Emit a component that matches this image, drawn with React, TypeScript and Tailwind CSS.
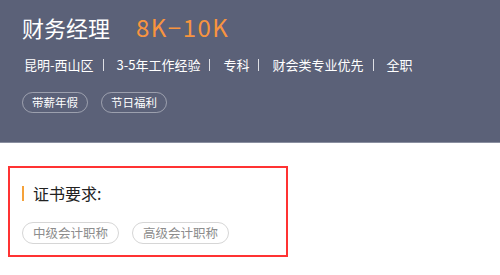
export default function App() {
  const meta = ["昆明-西山区", "3-5年工作经验", "专科", "财会类专业优先", "全职"];
  const perks = ["带薪年假", "节日福利"];
  const certs = ["中级会计职称", "高级会计职称"];

  return (
    <div
      className="w-[500px] h-[275px] bg-white"
      style={{ fontFamily: '"Noto Sans CJK SC", "Noto Sans", sans-serif' }}
    >
      <div className="h-[143px] bg-[#5b6178] px-[22px] pt-[10px] border-b border-[#8a8fa0]">
        <div className="flex items-center gap-[26px] h-[34px]">
          <h1 className="text-[22px] text-white leading-none">财务经理</h1>
          <span className="text-[24px] text-[#f8943f] leading-none tracking-[1.5px]">8K−10K</span>
        </div>
        <div className="mt-[14px] ml-[2px] flex items-center text-[13px] text-white leading-none">
          {meta.map((m, i) => (
            <span key={m} className="flex items-center">
              {i > 0 && <span className="ml-[9px] mr-[13px] h-[12px] w-px bg-white/80" />}
              {m}
            </span>
          ))}
        </div>
        <div className="mt-[21px] flex gap-[13px]">
          {perks.map((p) => (
            <span
              key={p}
              className="h-[21px] px-[9px] flex items-center rounded-full border border-white/40 text-[11.5px] text-white leading-none"
            >
              {p}
            </span>
          ))}
        </div>
      </div>

      <div className="mx-[8px] mt-[23px] w-[280px] h-[91px] border-2 border-[#ff3333] px-[12px] pt-[17px]">
        <div className="flex items-center gap-[9px]">
          <span className="w-[2px] h-[15px] bg-[#f5a23a]" />
          <span className="text-[16px] text-[#222] leading-none">证书要求:</span>
        </div>
        <div className="mt-[21px] flex gap-[13px]">
          {certs.map((c) => (
            <span
              key={c}
              className="h-[22px] px-[10px] flex items-center rounded-full border border-[#d6d6d6] text-[12.5px] text-[#8c8c8c] leading-none"
            >
              {c}
            </span>
          ))}
        </div>
      </div>
    </div>
  );
}
